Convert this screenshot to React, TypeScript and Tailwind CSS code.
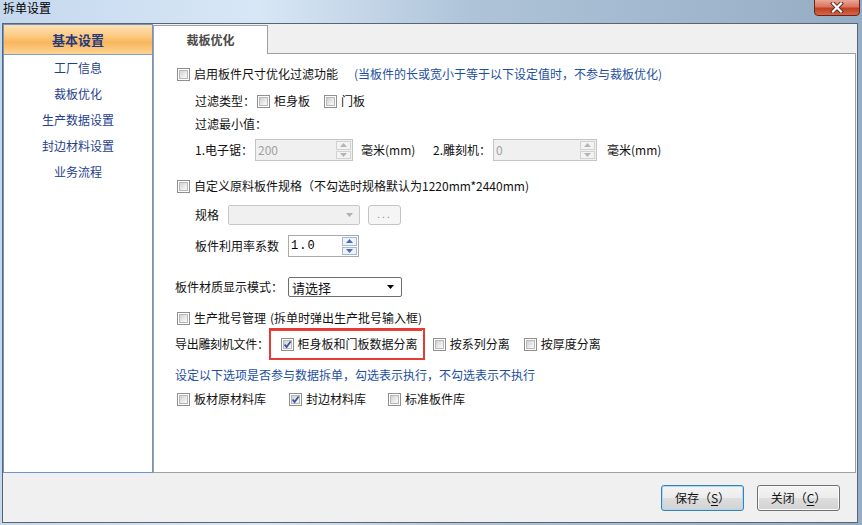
import clsx from "clsx";
import type { ReactNode } from "react";

const CheckBox = ({ checked = false }: { checked?: boolean }) => (
	<span className="relative flex h-[13px] w-[13px] shrink-0 items-center justify-center border border-[#8f8f8f] bg-white">
		<span className="h-[9px] w-[9px] border border-[#b9b9b9] bg-[linear-gradient(135deg,#cdd0d4_0%,#e9e9e9_55%,#fafafa_100%)]" />
		{checked && (
			<svg className="absolute left-[0px] top-[0px]" width="11" height="11" viewBox="0 0 11 11">
				<path d="M2.6 5.4 L4.6 8 L8.6 2.4" fill="none" stroke="#3b4f9c" strokeWidth="1.7" />
			</svg>
		)}
	</span>
);

const CheckLabel = ({ checked, children, className }: { checked?: boolean; children: ReactNode; className?: string }) => (
	<span className={clsx("flex items-center", className)}>
		<CheckBox checked={checked} />
		<span className="ml-[4px] whitespace-nowrap">{children}</span>
	</span>
);

const Tri = ({ up, color }: { up?: boolean; color: string }) => (
	<svg width="7" height="4" viewBox="0 0 7 4">
		<path d={up ? "M0 4 L3.5 0 L7 4 Z" : "M0 0 L7 0 L3.5 4 Z"} fill={color} />
	</svg>
);

const Spin = ({ value, width, disabled }: { value: string; width: string; disabled?: boolean }) => (
	<span
		className={clsx(
			"flex h-[22px] shrink-0 items-stretch border",
			width,
			disabled ? "border-[#c4c4c4] bg-[#f0f0f0] text-[#a0a0a0]" : "border-[#a9a9a9] bg-white text-black",
		)}>
		<span className={clsx("flex flex-1 items-center pl-[2px]", !disabled && "font-[family-name:Liberation_Mono,monospace] tracking-[1px]")}>{value}</span>
		<span className="my-[1px] mr-[1px] flex w-[15px] flex-col gap-[1px]">
			<span className={clsx("flex flex-1 items-center justify-center border", disabled ? "border-[#d2d2d2] bg-[#f3f3f3]" : "border-[#a8b8d0] bg-[#eef3fa]")}>
				<Tri up color={disabled ? "#b4b4b4" : "#4a6cb0"} />
			</span>
			<span className={clsx("flex flex-1 items-center justify-center border", disabled ? "border-[#d2d2d2] bg-[#f3f3f3]" : "border-[#a8b8d0] bg-[#eef3fa]")}>
				<Tri color={disabled ? "#b4b4b4" : "#4a6cb0"} />
			</span>
		</span>
	</span>
);

const sideItems = ["工厂信息", "裁板优化", "生产数据设置", "封边材料设置", "业务流程"];

export default function App() {
	return (
		<div className="flex h-[525px] w-[862px] flex-col overflow-hidden bg-[linear-gradient(90deg,#c4d8ee_0%,#d8e7f6_30%,#aec3d8_55%,#95adc4_100%)] pb-[2px] pl-[2px] pr-[4px] font-[family-name:Noto_Sans_CJK_SC,sans-serif] text-[12px] leading-none text-[#111]">
			{/* title bar */}
			<div className="relative h-[23px] shrink-0">
				<span className="absolute left-[1px] top-[2px] text-[12px] text-black">拆单设置</span>
				<div className="absolute right-[-2px] top-[-1px] flex h-[17px] w-[46px] items-center justify-center rounded-b-[4px] border border-[#6b2415] bg-[linear-gradient(180deg,#eaa797_0%,#d9755e_45%,#c43f22_55%,#d3654a_100%)]">
					<svg width="14" height="11" viewBox="0 0 14 11">
						<path d="M3 1.5 L11 9.5 M11 1.5 L3 9.5" stroke="#5a2a20" strokeWidth="4" strokeLinecap="square" />
						<path d="M3 1.5 L11 9.5 M11 1.5 L3 9.5" stroke="#ffffff" strokeWidth="2.2" strokeLinecap="square" />
					</svg>
				</div>
			</div>

			{/* client area */}
			<div className="flex h-[500px] flex-col border border-[#5b6470] bg-[#f0f0f0]">
				<div className="flex h-[449px]">
					{/* sidebar */}
					<div className="flex w-[150px] flex-col border border-[#6f94c8] bg-white">
						<div className="flex h-[30px] items-center justify-center border-b border-[#7c9fd2] bg-[linear-gradient(180deg,#fde2b6_0%,#fcc87f_40%,#fab65b_60%,#fdd494_100%)] text-[13px] font-bold text-[#1f3a7d]">
							基本设置
						</div>
						{sideItems.map((s) => (
							<div key={s} className="flex h-[26px] items-center justify-center text-[#1e3f8e]">
								{s}
							</div>
						))}
					</div>

					{/* tab panel */}
					<div className="mr-[1px] flex flex-1 flex-col pt-[1px]">
						<div className="flex h-[29px] shrink-0 border-b border-[#a0a0a0]">
							<div className="-mb-[1px] flex w-[115px] items-center justify-center border-x border-t border-[#a0a0a0] bg-white font-bold text-[#4a4a4a]">
								裁板优化
							</div>
						</div>
						<div className="flex flex-1 flex-col border-x border-b border-[#a0a0a0] bg-white pl-[21px] pt-[8px]">
							<div className="flex h-[24px] items-center">
								<CheckLabel className="ml-[2px]">启用板件尺寸优化过滤功能</CheckLabel>
								<span className="ml-[16px] whitespace-nowrap text-[#1c4fa1]">(当板件的长或宽小于等于以下设定值时，不参与裁板优化)</span>
							</div>
							<div className="flex h-[30px] items-center pl-[20px]">
								<span className="w-[62px] whitespace-nowrap">过滤类型：</span>
								<CheckLabel>柜身板</CheckLabel>
								<CheckLabel className="ml-[14px]">门板</CheckLabel>
							</div>
							<div className="flex h-[16px] items-center pl-[20px]">过滤最小值：</div>
							<div className="flex h-[36px] items-center pl-[20px]">
								<span className="w-[60px] shrink-0 whitespace-nowrap">1.电子锯：</span>
								<Spin value="200" width="w-[98px]" disabled />
								<span className="ml-[8px] w-[72px] shrink-0 whitespace-nowrap">毫米(mm)</span>
								<span className="w-[60px] shrink-0 whitespace-nowrap">2.雕刻机：</span>
								<Spin value="0" width="w-[104px]" disabled />
								<span className="ml-[10px] whitespace-nowrap">毫米(mm)</span>
							</div>
							<div className="flex h-[36px] items-center">
								<CheckLabel className="ml-[2px]">自定义原料板件规格（不勾选时规格默认为1220mm*2440mm)</CheckLabel>
							</div>
							<div className="flex h-[22px] items-center pl-[20px]">
								<span className="w-[33px]">规格</span>
								<span className="flex h-[20px] w-[132px] items-center justify-end rounded-[2px] border border-[#c8c8c8] bg-[#f0f0f0] pr-[6px]">
									<Tri color="#b0b0b0" />
								</span>
								<span className="ml-[8px] flex h-[20px] w-[33px] items-center justify-center rounded-[3px] border border-[#c4c4c4] bg-[#f5f5f5] pb-[3px] text-[10px] tracking-[2px] text-[#8c8c8c]">
									...
								</span>
							</div>
							<div className="flex h-[40px] items-center pl-[20px]">
								<span className="w-[93px] whitespace-nowrap">板件利用率系数</span>
								<Spin value="1.0" width="w-[71px]" />
							</div>
							<div className="flex h-[42px] items-center">
								<span className="w-[113px] whitespace-nowrap">板件材质显示模式：</span>
								<span className="flex h-[20px] w-[114px] items-center justify-between rounded-[2px] border border-[#6e6e6e] bg-white pl-[3px] pr-[7px] text-[13px]">
									请选择
									<Tri color="#000" />
								</span>
							</div>
							<div className="flex h-[20px] items-center">
								<CheckLabel className="ml-[2px]">
									生产批号管理
									<span className="relative ml-[4px]">
										(拆单时弹出生产批号输入框)
										<span className="absolute -bottom-[5px] left-0 right-0 h-[1px] bg-[#e8403a]" />
									</span>
								</CheckLabel>
							</div>
							<div className="flex h-[32px] items-center">
								<span className="shrink-0 whitespace-nowrap tracking-[-0.3px]">导出雕刻机文件：</span>
								<span className="flex h-[32px] shrink-0 items-center border-2 border-[#e63b35] pl-[10px] pr-[5px]">
									<CheckLabel checked>柜身板和门板数据分离</CheckLabel>
								</span>
								<CheckLabel className="ml-[8px]">按系列分离</CheckLabel>
								<CheckLabel className="ml-[14px]">按厚度分离</CheckLabel>
							</div>
							<div className="flex h-[30px] items-center whitespace-nowrap text-[#1c4fa1]">设定以下选项是否参与数据拆单，勾选表示执行，不勾选表示不执行</div>
							<div className="flex h-[18px] items-center">
								<CheckLabel className="ml-[2px] w-[112px]">板材原材料库</CheckLabel>
								<CheckLabel checked className="w-[99px]">
									封边材料库
								</CheckLabel>
								<CheckLabel>标准板件库</CheckLabel>
							</div>
						</div>
					</div>
				</div>

				{/* buttons */}
				<div className="flex flex-1 items-start justify-end gap-[13px] pr-[17px] pt-[12px]">
					<button className="flex h-[26px] w-[83px] items-center justify-center rounded-[3px] border border-[#3c7fb1] bg-[linear-gradient(180deg,#f4f4f4_0%,#ececec_50%,#dedede_50%,#d2d2d2_100%)] shadow-[inset_0_0_0_1px_#a8dbf6]">
						保存（<span className="underline underline-offset-2">S</span>）
					</button>
					<button className="flex h-[26px] w-[83px] items-center justify-center rounded-[3px] border border-[#707070] bg-[linear-gradient(180deg,#f4f4f4_0%,#ececec_50%,#dedede_50%,#d2d2d2_100%)] shadow-[inset_0_0_0_1px_#fbfbfb]">
						关闭（<span className="underline underline-offset-2">C</span>）
					</button>
				</div>
			</div>
		</div>
	);
}
